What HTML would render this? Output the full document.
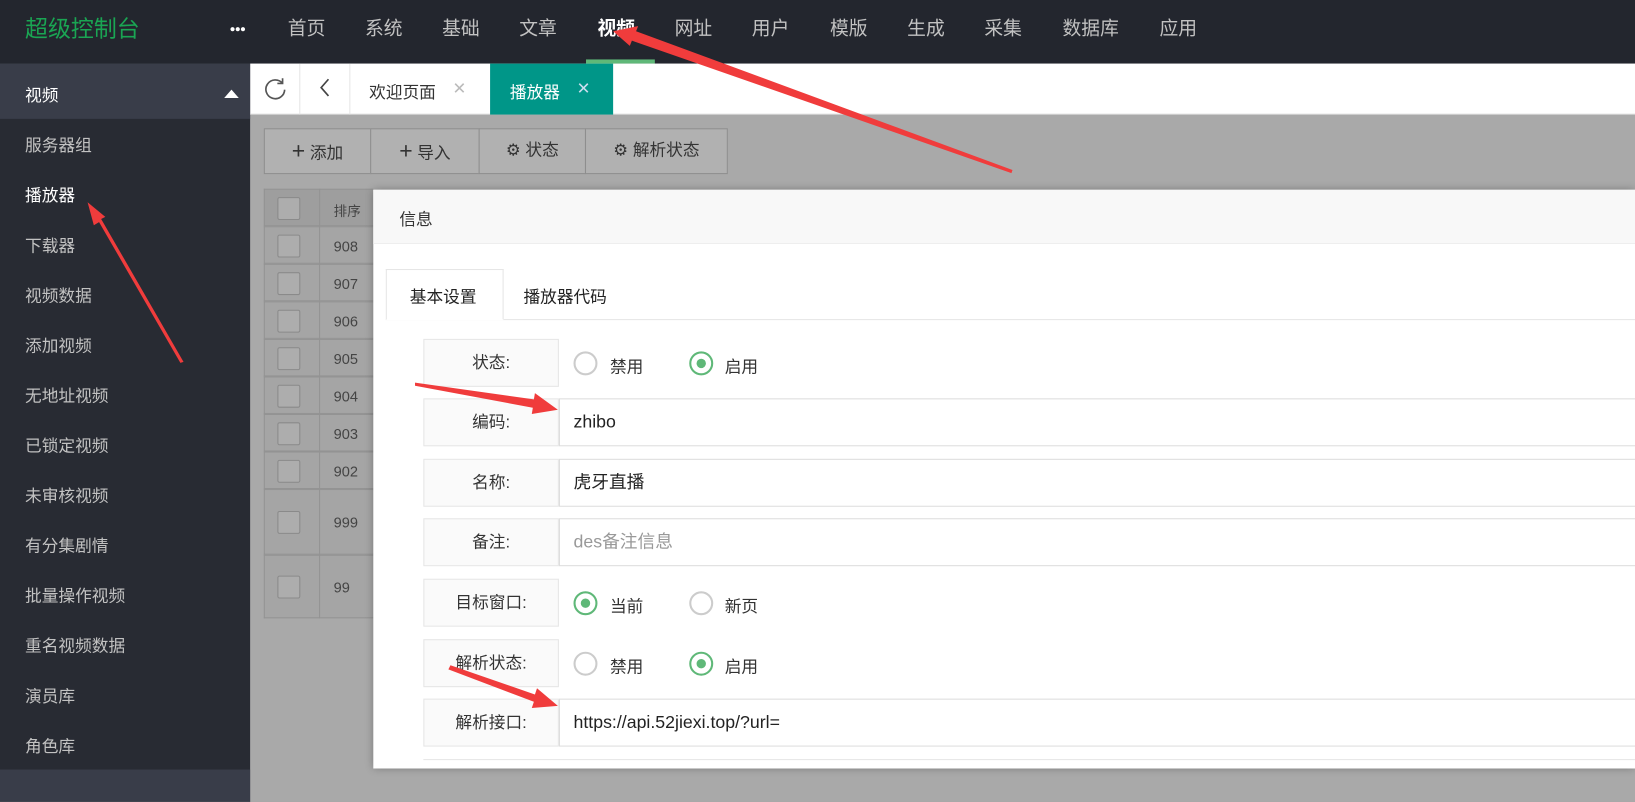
<!DOCTYPE html>
<html><head><meta charset="utf-8"><style>
*{margin:0;padding:0;box-sizing:border-box}
html,body{width:1635px;height:802px;overflow:hidden;background:#a9a9a9}
#w{position:absolute;left:0;top:0;width:1568px;height:769px;transform:scale(1.04273);transform-origin:0 0;font-family:"Liberation Sans","Noto Sans CJK SC",sans-serif;overflow:hidden}
.a{position:absolute}
.top{left:0;top:0;width:1568px;height:61px;background:#23262e}
.nav{top:13px;font-size:18px;color:#c2c2c2}
.side{left:0;top:61px;width:240px;height:708px;background:#282b33}
.si{left:24px;font-size:16px;color:#c2c2c2;margin-top:-3px}
.tabs{left:240px;top:61px;width:1328px;height:49px;background:#fff;border-bottom:1px solid #ddd}
.grey{left:240px;top:110px;width:1328px;height:659px;background:#a9a9a9}
.btn{top:123px;height:44px;background:#b1b1b1;border:1px solid #8e8e8e;font-size:16px;color:#333;line-height:42px;text-align:center}
.tr{left:253px;width:105px;border:1px solid #939393;border-right:none;background:#a5a5a5}
.cb{position:absolute;left:12px;width:22px;height:22px;border:1px solid #8a8a8a;border-radius:2px;background:#adadad}
.num{position:absolute;left:66px;font-size:14px;color:#444}
.lbl{left:406px;width:130px;height:46px;border:1px solid #e6e6e6;background:#fafafa;font-size:16px;color:#333;text-align:center;line-height:46px}
.inp{left:536px;width:1040px;height:46px;border:1px solid #ddd;background:#fff;font-size:17px;color:#222;line-height:44px;padding-left:13px}
.rad{width:23px;height:23px;border-radius:50%;border:2px solid #ccc;background:#fff}
.on{border-color:#5fb878}
.on::after{content:"";position:absolute;left:5px;top:5px;width:9px;height:9px;border-radius:50%;background:#5fb878}
.rt{font-size:16px;color:#333}
</style></head><body><div id="w">
<div class="a top"></div>
<div class="a" style="left:24px;top:10px;font-size:22px;color:#1aa553">超级控制台</div>
<div class="a" style="left:221px;top:26px;width:4px;height:4px;border-radius:2px;background:#fff;box-shadow:5px 0 #fff,10px 0 #fff"></div>
<div class="a nav" style="left:276px">首页</div><div class="a nav" style="left:350px">系统</div><div class="a nav" style="left:424px">基础</div><div class="a nav" style="left:498px">文章</div><div class="a nav" style="left:573px;color:#fff;font-weight:bold">视频</div><div class="a nav" style="left:647px">网址</div><div class="a nav" style="left:721px">用户</div><div class="a nav" style="left:796px">模版</div><div class="a nav" style="left:870px">生成</div><div class="a nav" style="left:944px">采集</div><div class="a nav" style="left:1019px">数据库</div><div class="a nav" style="left:1112px">应用</div>
<div class="a" style="left:562px;top:57px;width:66px;height:4px;background:#5fb878"></div>
<div class="a side"></div>
<div class="a" style="left:0;top:61px;width:240px;height:53px;background:#393d49"></div>
<div class="a" style="left:24px;top:78px;font-size:16px;color:#fff">视频</div>
<div class="a" style="left:215px;top:86px;width:0;height:0;border-left:7px solid transparent;border-right:7px solid transparent;border-bottom:8px solid #fff"></div>
<div class="a si" style="top:129px">服务器组</div><div class="a si" style="top:177px;color:#fff">播放器</div><div class="a si" style="top:225px">下载器</div><div class="a si" style="top:273px">视频数据</div><div class="a si" style="top:321px">添加视频</div><div class="a si" style="top:369px">无地址视频</div><div class="a si" style="top:417px">已锁定视频</div><div class="a si" style="top:465px">未审核视频</div><div class="a si" style="top:513px">有分集剧情</div><div class="a si" style="top:561px">批量操作视频</div><div class="a si" style="top:609px">重名视频数据</div><div class="a si" style="top:657px">演员库</div><div class="a si" style="top:705px">角色库</div>
<div class="a" style="left:0;top:738px;width:240px;height:31px;background:#393d49"></div>
<div class="a tabs"></div>
<div class="a" style="left:287px;top:61px;width:1px;height:49px;background:#e6e6e6"></div>
<div class="a" style="left:335px;top:61px;width:1px;height:49px;background:#e6e6e6"></div>
<svg class="a" style="left:252px;top:72px" width="24" height="24" viewBox="0 0 24 24"><path d="M19 8A9 9 0 1 0 21 14M19 3v5h-5" fill="none" stroke="#555" stroke-width="1.6"/></svg>
<svg class="a" style="left:304px;top:74px" width="16" height="20" viewBox="0 0 16 20"><path d="M11 2L4 10l7 8" fill="none" stroke="#444" stroke-width="1.6"/></svg>
<div class="a" style="left:354px;top:75px;font-size:16px;color:#333">欢迎页面</div>
<div class="a" style="left:434px;top:75px;font-size:16px;color:#bbb">✕</div>
<div class="a" style="left:470px;top:61px;width:118px;height:49px;background:#009688"></div>
<div class="a" style="left:489px;top:75px;font-size:16px;color:#fff">播放器</div>
<div class="a" style="left:553px;top:75px;font-size:16px;color:#cde">✕</div>
<div class="a grey"></div>
<div class="a btn" style="left:253px;width:103px"><b style="font-size:22px;font-weight:normal">+</b> 添加</div>
<div class="a btn" style="left:355px;width:105px"><b style="font-size:22px;font-weight:normal">+</b> 导入</div>
<div class="a btn" style="left:459px;width:103px">⚙ 状态</div>
<div class="a btn" style="left:561px;width:137px">⚙ 解析状态</div>
<div class="a tr" style="top:181px;height:36px;background:#9e9e9e"><div class="cb" style="top:7px"></div><div class="num" style="top:10px;font-size:13px">排序</div></div>
<div class="a tr" style="top:217px;height:36px"><div class="cb" style="top:7px"></div><div class="num" style="top:10px">908</div></div>
<div class="a tr" style="top:253px;height:36px"><div class="cb" style="top:7px"></div><div class="num" style="top:10px">907</div></div>
<div class="a tr" style="top:289px;height:36px"><div class="cb" style="top:7px"></div><div class="num" style="top:10px">906</div></div>
<div class="a tr" style="top:325px;height:36px"><div class="cb" style="top:7px"></div><div class="num" style="top:10px">905</div></div>
<div class="a tr" style="top:361px;height:36px"><div class="cb" style="top:7px"></div><div class="num" style="top:10px">904</div></div>
<div class="a tr" style="top:397px;height:36px"><div class="cb" style="top:7px"></div><div class="num" style="top:10px">903</div></div>
<div class="a tr" style="top:433px;height:36px"><div class="cb" style="top:7px"></div><div class="num" style="top:10px">902</div></div>
<div class="a tr" style="top:469px;height:63px"><div class="cb" style="top:20px"></div><div class="num" style="top:23px">999</div></div>
<div class="a tr" style="top:532px;height:61px;border-bottom:1px solid #939393"><div class="cb" style="top:19px"></div><div class="num" style="top:22px">99</div></div>
<div class="a" style="left:306px;top:181px;width:1px;height:412px;background:#939393"></div>
<div class="a" style="left:358px;top:182px;width:1210px;height:555px;background:#fff;box-shadow:0 0 8px rgba(0,0,0,.3)"></div>
<div class="a" style="left:358px;top:182px;width:1210px;height:52px;background:#f8f8f8;border-bottom:1px solid #eee"></div>
<div class="a" style="left:383px;top:197px;font-size:16px;color:#333">信息</div>
<div class="a" style="left:370px;top:306px;width:1198px;height:1px;background:#e6e6e6"></div>
<div class="a" style="left:370px;top:258px;width:113px;height:49px;border:1px solid #e6e6e6;border-bottom:1px solid #fff;background:#fff"></div>
<div class="a" style="left:393px;top:271px;font-size:16px;color:#222">基本设置</div>
<div class="a" style="left:502px;top:271px;font-size:16px;color:#222">播放器代码</div>
<div class="a lbl" style="top:325px">状态:</div>
<div class="a rad" style="left:550px;top:337px"></div><div class="a rt" style="left:585px;top:338px">禁用</div>
<div class="a rad on" style="left:661px;top:337px"></div><div class="a rt" style="left:695px;top:338px">启用</div>
<div class="a lbl" style="top:382px">编码:</div><div class="a inp" style="top:382px">zhibo</div>
<div class="a lbl" style="top:440px">名称:</div><div class="a inp" style="top:440px">虎牙直播</div>
<div class="a lbl" style="top:497px">备注:</div><div class="a inp" style="top:497px;color:#999">des备注信息</div>
<div class="a lbl" style="top:555px">目标窗口:</div>
<div class="a rad on" style="left:550px;top:567px"></div><div class="a rt" style="left:585px;top:568px">当前</div>
<div class="a rad" style="left:661px;top:567px"></div><div class="a rt" style="left:695px;top:568px">新页</div>
<div class="a lbl" style="top:613px">解析状态:</div>
<div class="a rad" style="left:550px;top:625px"></div><div class="a rt" style="left:585px;top:626px">禁用</div>
<div class="a rad on" style="left:661px;top:625px"></div><div class="a rt" style="left:695px;top:626px">启用</div>
<div class="a lbl" style="top:670px">解析接口:</div><div class="a inp" style="top:670px">https://api.52jiexi.top/?url=</div>
<div class="a" style="left:406px;top:728px;width:1162px;height:9px;border-top:1px solid #e6e6e6"></div>
<svg class="a" style="left:0;top:0" width="1568" height="769">
<g fill="#f03c3c">
<polygon points="970,166 971,163 610,30 612,25 588,30 604,44 606,39"/>
<polygon points="176,347 173,348 95,213 90,216 84,194 101,208 97,210"/>
<polygon points="398,370 398,367 512,383 513,377 535,393 510,397 511,391"/>
<polygon points="430,642 432,638 513,666 515,660 535,677 510,679 512,673"/>
</g></svg>
</div></body></html>
